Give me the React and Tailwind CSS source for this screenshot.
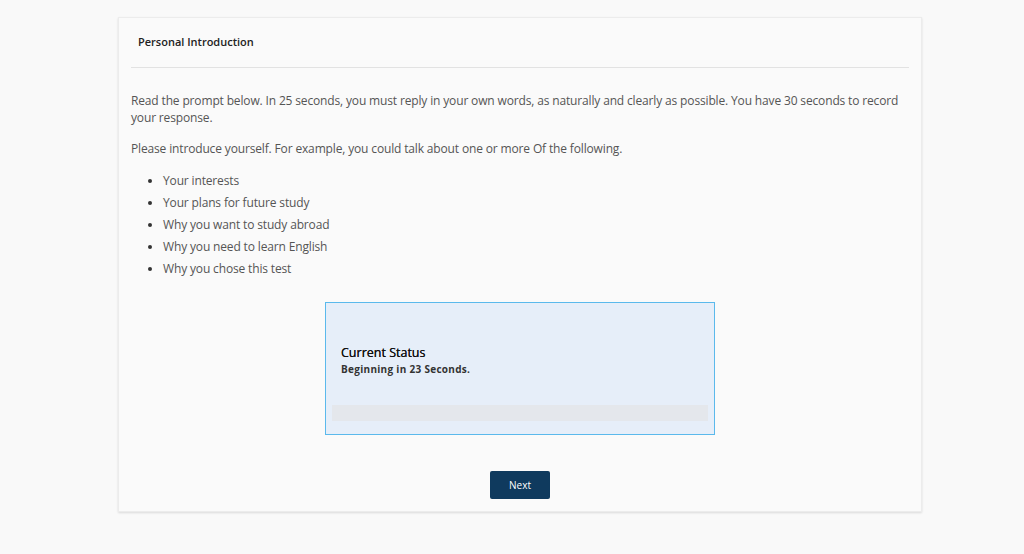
export default function App() {
  const items = [
    "Your interests",
    "Your plans for future study",
    "Why you want to study abroad",
    "Why you need to learn English",
    "Why you chose this test",
  ];
  return (
    <div className="min-h-[554px] w-[1024px] bg-[#f9f9f9] pt-[17px]" style={{ fontFamily: '"Open Sans", "Noto Sans", sans-serif' }}>
      <div className="ml-[118px] w-[804px] bg-[#fafafa] border border-[#ececec] shadow-[0_1px_2px_rgba(0,0,0,0.12)] px-[12px] pb-[12px]">
        <div className="h-[50px] flex items-center pl-[7px] text-[11px] font-semibold text-[#222] border-b border-[#e2e2e2]">
          Personal Introduction
        </div>
        <div className="pt-[24px] text-[12px] leading-[17px] text-[#555] tracking-[-0.15px]">
          <p>
            Read the prompt below. In 25 seconds, you must reply in your own words, as naturally and clearly as possible. You have 30 seconds to record your response.
          </p>
          <p className="mt-[14px]">
            Please introduce yourself. For example, you could talk about one or more Of the following.
          </p>
          <ul className="mt-[13px] pl-[32px] list-disc">
            {items.map((t) => (
              <li key={t} className="leading-[22px] marker:text-[#333]">{t}</li>
            ))}
          </ul>
        </div>
        <div className="mt-[22px] ml-[194px] w-[390px] h-[133px] border border-[#5ab9ec] bg-[#e6eef9] flex flex-col px-[6px]">
          <div className="pl-[9px] pt-[41px]">
            <div className="text-[12.5px] leading-[18px] text-[#111] [text-shadow:0_0_0.4px_#111]">Current Status</div>
            <div className="text-[10px] leading-[14px] font-bold text-[#333] tracking-[0.3px]">Beginning in 23 Seconds.</div>
          </div>
          <div className="mt-[29px] h-[16px] bg-[#e4e7ec]"></div>
        </div>
        <div className="mt-[36px] flex justify-center">
          <button className="w-[60px] h-[28px] bg-[#0f3a5e] text-white text-[10px] rounded-[2px]">Next</button>
        </div>
      </div>
    </div>
  );
}
